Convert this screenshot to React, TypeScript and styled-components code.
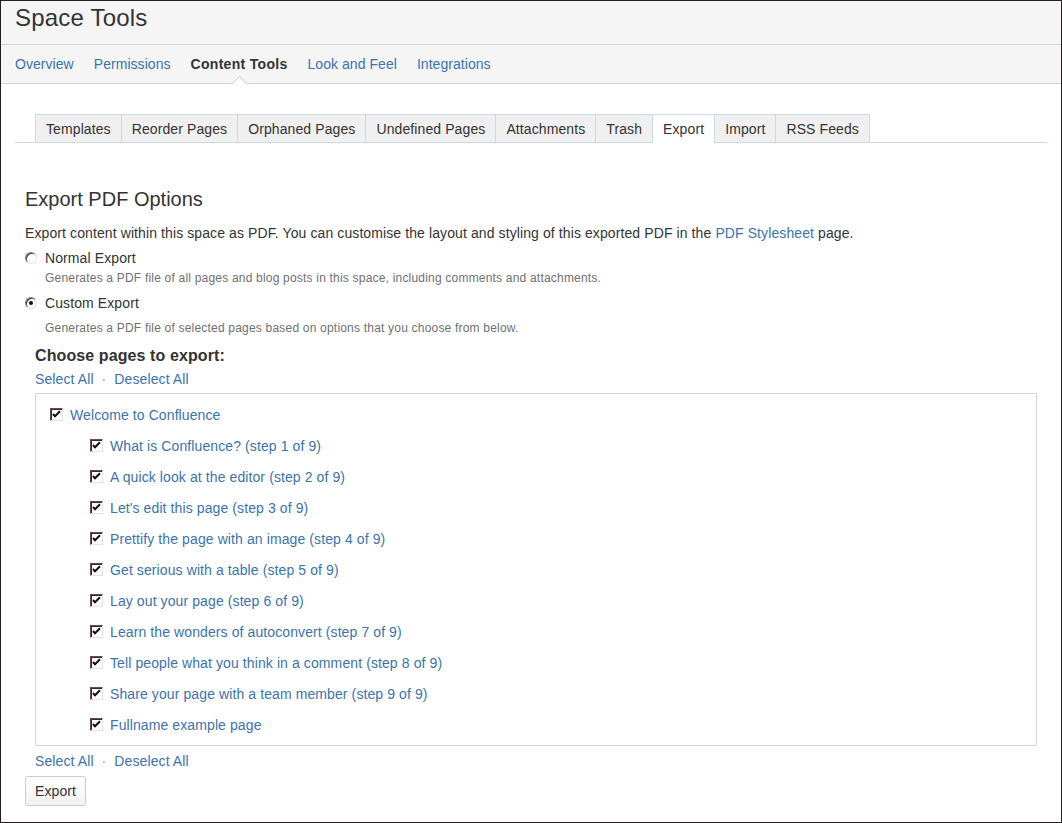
import { createGlobalStyle, styled } from "styled-components";

const GlobalStyle = createGlobalStyle`
  html, body {
    margin: 0;
    padding: 0;
    background: #fff;
  }
  body {
    font-family: "Liberation Sans", Arial, sans-serif;
    color: #333;
    letter-spacing: 0.1px;
  }
`;

const Frame = styled.div`
  box-sizing: border-box;
  width: 1062px;
  height: 823px;
  border: 1px solid #231f20;
  background: #fff;
  overflow: hidden;
`;

const Header = styled.header`
  box-sizing: border-box;
  height: 44px;
  padding: 3px 14px 0;
  background: #f5f5f5;
  border-bottom: 1px solid #ccd9dd;
`;

const Title = styled.h1`
  margin: 0;
  font-size: 24px;
  line-height: 28px;
  font-weight: 400;
  letter-spacing: 0.2px;
  color: #333;
`;

const Nav = styled.nav`
  box-sizing: border-box;
  height: 39px;
  display: flex;
  gap: 20px;
  padding: 0 14px;
  background: #f5f5f5;
  border-bottom: 1px solid #ccd9dd;
`;

const NavItem = styled.a<{ $active?: boolean }>`
  position: relative;
  display: flex;
  align-items: center;
  font-size: 14px;
  text-decoration: none;
  color: ${(p) => (p.$active ? "#333" : "#3b73af")};
  font-weight: ${(p) => (p.$active ? 700 : 400)};
  letter-spacing: ${(p) => (p.$active ? "0.3px" : "0.05px")};

  ${(p) =>
    p.$active &&
    `
    &::after {
      content: "";
      position: absolute;
      left: calc(50% - 5px);
      bottom: -6px;
      width: 10px;
      height: 10px;
      background: #fff;
      border-top: 1px solid #ccd9dd;
      border-left: 1px solid #ccd9dd;
      transform: rotate(45deg);
    }
  `}
`;

const Content = styled.main`
  padding: 0 14px;
`;

const TabStrip = styled.div`
  display: flex;
  margin-top: 30px;
  padding-left: 20px;
  border-bottom: 1px solid #ccd9dd;
`;

const Tab = styled.div<{ $active?: boolean }>`
  box-sizing: border-box;
  height: ${(p) => (p.$active ? "29px" : "28px")};
  margin-bottom: ${(p) => (p.$active ? "-1px" : "0")};
  margin-right: -1px;
  padding: 0 10px;
  display: flex;
  align-items: center;
  padding-bottom: ${(p) => (p.$active ? "1px" : "0")};
  font-size: 14px;
  color: #333;
  background: ${(p) => (p.$active ? "#fff" : "#f0f0f0")};
  border: 1px solid #ccd9dd;
  border-bottom: none;
  position: relative;
  z-index: ${(p) => (p.$active ? 1 : 0)};
`;

const Panel = styled.section`
  padding: 0 10px;
`;

const Heading = styled.h2`
  margin: 44px 0 0;
  font-size: 20px;
  line-height: 24px;
  font-weight: 400;
  letter-spacing: 0;
  color: #333;
`;

const Intro = styled.p`
  margin: 12px 0 0;
  font-size: 14px;
  line-height: 20px;
`;

const Link = styled.a`
  color: #3b73af;
  text-decoration: none;
`;

const OptionGroup = styled.div<{ $first?: boolean }>`
  margin-top: ${(p) => (p.$first ? "5px" : "7px")};
`;

const OptionRow = styled.label`
  display: flex;
  align-items: center;
  gap: 8px;
  font-size: 14px;
  line-height: 20px;
`;

const Radio = styled.span<{ $checked?: boolean }>`
  box-sizing: border-box;
  position: relative;
  width: 12px;
  height: 12px;
  border-radius: 50%;
  border: 1px solid;
  border-color: #7a7a7a #e3e3e3 #e3e3e3 #7a7a7a;
  box-shadow: inset 1px 1px 0 #404040;
  background: #fff;

  ${(p) =>
    p.$checked &&
    `
    &::after {
      content: "";
      position: absolute;
      left: 3px;
      top: 3px;
      width: 4px;
      height: 4px;
      border-radius: 50%;
      background: #111;
    }
  `}
`;

const OptionHint = styled.div<{ $gap: number }>`
  margin: ${(p) => p.$gap}px 0 0 20px;
  font-size: 12px;
  line-height: 16px;
  letter-spacing: 0.2px;
  color: #707070;
`;

const ChooseTitle = styled.h3`
  margin: 10px 0 0 10px;
  font-size: 16px;
  line-height: 20px;
  font-weight: 700;
  color: #333;
`;

const SelectBar = styled.div<{ $top: number }>`
  display: flex;
  gap: 8px;
  margin: ${(p) => p.$top}px 0 0 10px;
  font-size: 14px;
  line-height: 20px;
`;

const Dot = styled.span`
  color: #999;
`;

const PageBox = styled.div`
  margin: 4px 0 0 10px;
  padding: 5px 14px;
  border: 1px solid #ccd9dd;
`;

const PageRow = styled.label<{ $depth: number }>`
  display: flex;
  align-items: center;
  gap: 7px;
  height: 31px;
  padding-left: ${(p) => p.$depth * 40}px;
  font-size: 14px;
  color: #3b73af;
`;

const CheckBox = styled.span`
  box-sizing: border-box;
  display: flex;
  width: 13px;
  height: 13px;
  border: 1px solid;
  border-color: #6b4a4a #e3e3e3 #e3e3e3 #6b4a4a;
  box-shadow: inset 1px 1px 0 #3a2a2a;
  background: #fff;
`;

const ExportButton = styled.button`
  box-sizing: border-box;
  margin-top: 5px;
  height: 30px;
  padding: 0 9px;
  font-family: inherit;
  font-size: 14px;
  letter-spacing: 0.1px;
  color: #333;
  background: linear-gradient(#fff, #f2f2f2);
  border: 1px solid #ccc;
  border-radius: 3px;
`;

const Check = () => (
  <svg width="11" height="11" viewBox="0 0 11 11">
    <path d="M2 5 L4 7.2 L9 2.3" fill="none" stroke="#111" strokeWidth="2" />
  </svg>
);

const navItems = ["Overview", "Permissions", "Content Tools", "Look and Feel", "Integrations"];

const tabs = [
  "Templates",
  "Reorder Pages",
  "Orphaned Pages",
  "Undefined Pages",
  "Attachments",
  "Trash",
  "Export",
  "Import",
  "RSS Feeds",
];

const pages = [
  { title: "Welcome to Confluence", depth: 0 },
  { title: "What is Confluence? (step 1 of 9)", depth: 1 },
  { title: "A quick look at the editor (step 2 of 9)", depth: 1 },
  { title: "Let's edit this page (step 3 of 9)", depth: 1 },
  { title: "Prettify the page with an image (step 4 of 9)", depth: 1 },
  { title: "Get serious with a table (step 5 of 9)", depth: 1 },
  { title: "Lay out your page (step 6 of 9)", depth: 1 },
  { title: "Learn the wonders of autoconvert (step 7 of 9)", depth: 1 },
  { title: "Tell people what you think in a comment (step 8 of 9)", depth: 1 },
  { title: "Share your page with a team member (step 9 of 9)", depth: 1 },
  { title: "Fullname example page", depth: 1 },
];

function SelectLinks({ top }: { top: number }) {
  return (
    <SelectBar $top={top}>
      <Link href="#">Select All</Link>
      <Dot>·</Dot>
      <Link href="#">Deselect All</Link>
    </SelectBar>
  );
}

function App() {
  return (
    <Frame>
      <GlobalStyle />
      <Header>
        <Title>Space Tools</Title>
      </Header>
      <Nav>
        {navItems.map((item) => (
          <NavItem key={item} href="#" $active={item === "Content Tools"}>
            {item}
          </NavItem>
        ))}
      </Nav>
      <Content>
        <TabStrip>
          {tabs.map((tab) => (
            <Tab key={tab} $active={tab === "Export"}>
              {tab}
            </Tab>
          ))}
        </TabStrip>
        <Panel>
          <Heading>Export PDF Options</Heading>
          <Intro>
            Export content within this space as PDF. You can customise the layout and styling of
            this exported PDF in the <Link href="#">PDF Stylesheet</Link> page.
          </Intro>
          <OptionGroup $first>
            <OptionRow>
              <Radio />
              Normal Export
            </OptionRow>
            <OptionHint $gap={2}>
              Generates a PDF file of all pages and blog posts in this space, including comments and
              attachments.
            </OptionHint>
          </OptionGroup>
          <OptionGroup>
            <OptionRow>
              <Radio $checked />
              Custom Export
            </OptionRow>
            <OptionHint $gap={7}>
              Generates a PDF file of selected pages based on options that you choose from below.
            </OptionHint>
          </OptionGroup>
          <ChooseTitle>Choose pages to export:</ChooseTitle>
          <SelectLinks top={3} />
          <PageBox>
            {pages.map((page) => (
              <PageRow key={page.title} $depth={page.depth}>
                <CheckBox>
                  <Check />
                </CheckBox>
                {page.title}
              </PageRow>
            ))}
          </PageBox>
          <SelectLinks top={5} />
          <ExportButton>Export</ExportButton>
        </Panel>
      </Content>
    </Frame>
  );
}

export default App;
